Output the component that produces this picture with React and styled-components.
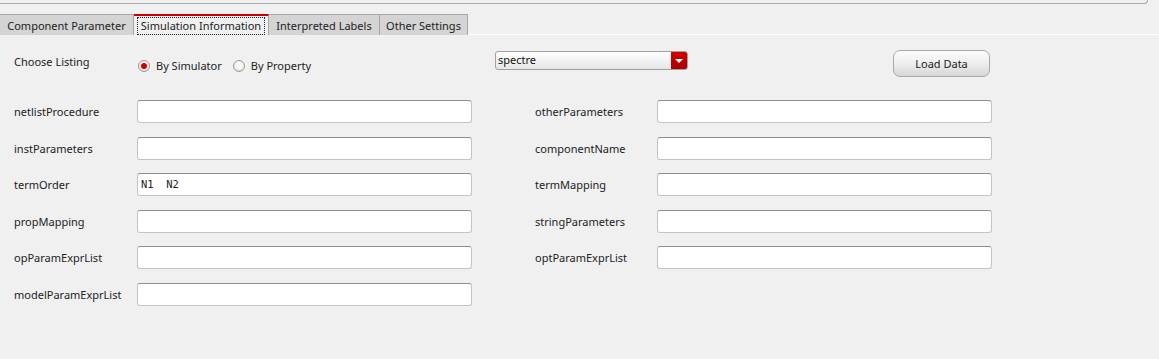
import React from "react";
import styled, { createGlobalStyle } from "styled-components";

const Global = createGlobalStyle`
  html, body { margin: 0; padding: 0; background: #f0f0f0; }
  body { font-family: "Noto Sans", "Open Sans", sans-serif; font-size: 11px; color: #222; }
  #root { height: 359px; overflow: hidden; }
`;

const Page = styled.div`
  width: 1159px;
  height: 359px;
  background: #f0f0f0;
  display: flex;
  flex-direction: column;
`;

const TopFrame = styled.div`
  width: 1147px;
  height: 3px;
  border-bottom: 1px solid #a9a9a9;
  border-right: 1px solid #a9a9a9;
  border-bottom-right-radius: 4px;
  flex: none;
`;

const TabBar = styled.div`
  margin-top: 10px;
  height: 20px;
  display: flex;
  align-items: stretch;
  border-bottom: 1px solid #ffffff;
  flex: none;
`;

const Tab = styled.div`
  box-sizing: border-box;
  height: 21px;
  margin-bottom: -1px;
  width: ${(p) => p.$w}px;
  display: flex;
  align-items: center;
  justify-content: center;
  background: ${(p) => (p.$active ? "#f0f0f0" : "#d4d4d4")};
  border-top: ${(p) => (p.$active ? "2px solid #cc0000" : "1px solid #a8a8a8")};
  border-right: 1px solid #a8a8a8;
  color: #222;
  font-size: 11px;
  white-space: nowrap;
  padding-top: ${(p) => (p.$active ? "0" : "1px")};
`;

const FocusText = styled.span`
  outline: 1px dotted #222;
  padding: 1px 3px;
  line-height: 14px;
`;

const Panel = styled.div`
  padding: 15px 0 0 14px;
  display: flex;
  flex-direction: column;
`;

const TopRow = styled.div`
  display: flex;
  align-items: flex-start;
  height: 26px;
`;

const TopLabel = styled.div`
  width: 124px;
  margin-top: 4px;
  line-height: 15px;
`;

const RadioGroup = styled.div`
  display: flex;
  align-items: center;
  margin-top: 8px;
  line-height: 15px;
  width: 357px;
`;

const RadioItem = styled.label`
  display: flex;
  align-items: center;
  margin-right: 11px;
`;

const RadioCircle = styled.span`
  box-sizing: border-box;
  width: 12px;
  height: 12px;
  border-radius: 50%;
  border: 1px solid #9a9a9a;
  background: radial-gradient(circle at 50% 35%, #ffffff 0%, #f4f4f4 50%, #d2d2d2 100%);
  display: flex;
  align-items: center;
  justify-content: center;
  margin-right: 6px;
  &::after {
    content: "";
    width: 6px;
    height: 6px;
    border-radius: 50%;
    background: ${(p) => (p.$checked ? "#d40000" : "transparent")};
  }
`;

const Select = styled.div`
  box-sizing: border-box;
  margin-top: 1px;
  width: 193px;
  height: 19px;
  border: 1px solid #a0a0a0;
  border-radius: 3px;
  background: linear-gradient(#ffffff, #e6e6e6);
  display: flex;
  align-items: stretch;
  overflow: hidden;
`;

const SelectText = styled.div`
  flex: 1;
  padding-left: 2px;
  line-height: 16px;
  color: #111;
`;

const SelectArrow = styled.div`
  width: 16px;
  background: linear-gradient(#d40000, #a80000);
  display: flex;
  align-items: center;
  justify-content: center;
  &::after {
    content: "";
    border-left: 4px solid transparent;
    border-right: 4px solid transparent;
    border-top: 4px solid #ffffff;
  }
`;

const Button = styled.button`
  box-sizing: border-box;
  margin-left: 205px;
  width: 97px;
  height: 27px;
  border: 1px solid #a8a8a8;
  border-radius: 7px;
  background: linear-gradient(#fbfbfb, #f0f0f0 45%, #d6d6d6);
  font-family: "Noto Sans", "Open Sans", sans-serif;
  font-size: 11px;
  color: #222;
  padding: 0;
`;

const FormGrid = styled.div`
  margin-top: 24px;
  display: grid;
  grid-template-columns: 123px 335px 63px 122px 335px;
  grid-auto-rows: 23px;
  row-gap: 13.6px;
  align-items: center;
`;

const FieldLabel = styled.div`
  grid-column: ${(p) => p.$col};
  line-height: 15px;
`;

const Input = styled.div`
  grid-column: ${(p) => p.$col};
  box-sizing: border-box;
  height: 23px;
  background: #ffffff;
  border: 1px solid #c4c4c4;
  border-top-color: #8e8e8e;
  border-radius: 3px;
  font-family: "DejaVu Sans Mono", "Liberation Mono", monospace;
  font-size: 10.5px;
  padding-left: 3px;
  line-height: 20px;
  color: #222;
  white-space: pre;
`;

const tabs = [
  { label: "Component Parameter", w: 134 },
  { label: "Simulation Information", w: 135, active: true },
  { label: "Interpreted Labels", w: 111 },
  { label: "Other Settings", w: 88 },
];

const rows = [
  [{ l: "netlistProcedure" }, { l: "otherParameters" }],
  [{ l: "instParameters" }, { l: "componentName" }],
  [{ l: "termOrder", v: "N1  N2" }, { l: "termMapping" }],
  [{ l: "propMapping" }, { l: "stringParameters" }],
  [{ l: "opParamExprList" }, { l: "optParamExprList" }],
  [{ l: "modelParamExprList" }, null],
];

export default function App() {
  return (
    <Page>
      <Global />
      <TopFrame />
      <TabBar>
        {tabs.map((t) => (
          <Tab key={t.label} $w={t.w} $active={t.active}>
            {t.active ? <FocusText>{t.label}</FocusText> : t.label}
          </Tab>
        ))}
      </TabBar>
      <Panel>
        <TopRow>
          <TopLabel>Choose Listing</TopLabel>
          <RadioGroup>
            <RadioItem>
              <RadioCircle $checked />
              By Simulator
            </RadioItem>
            <RadioItem>
              <RadioCircle />
              By Property
            </RadioItem>
          </RadioGroup>
          <Select>
            <SelectText>spectre</SelectText>
            <SelectArrow />
          </Select>
          <Button>Load Data</Button>
        </TopRow>
        <FormGrid>
          {rows.map((r, i) => (
            <React.Fragment key={i}>
              <FieldLabel $col={1}>{r[0].l}</FieldLabel>
              <Input $col={2}>{r[0].v || ""}</Input>
              {r[1] && (
                <>
                  <FieldLabel $col={4}>{r[1].l}</FieldLabel>
                  <Input $col={5}>{r[1].v || ""}</Input>
                </>
              )}
            </React.Fragment>
          ))}
        </FormGrid>
      </Panel>
    </Page>
  );
}
